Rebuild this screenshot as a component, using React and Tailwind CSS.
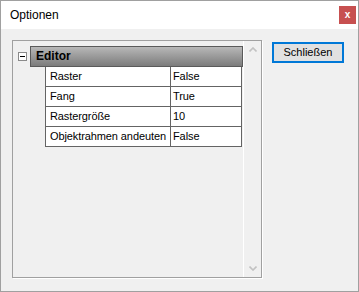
export default function App() {
  const rows = [
    ['Raster', 'False'],
    ['Fang', 'True'],
    ['Rastergröße', '10'],
    ['Objektrahmen andeuten', 'False'],
  ];

  return (
    <div className="w-[359px] h-[292px] border border-[#a0a0a0] flex flex-col bg-[#f0f0f0] text-[12px] text-black font-['Segoe_UI','Liberation_Sans',sans-serif]">
      {/* Title bar */}
      <div className="h-[28px] shrink-0 bg-white flex items-start justify-between">
        <span className="ml-[9px] mt-[6px] leading-[16px]">Optionen</span>
        <div className="mt-[5px] mr-[2px] w-[17px] h-[18px] bg-[#c75050] text-white text-[10px] font-bold leading-[18px] text-center">
          x
        </div>
      </div>

      {/* Client area */}
      <div className="flex flex-1 pl-[11px] pt-[11px]">
        {/* Property grid */}
        <div className="w-[250px] h-[238px] border border-[#a0a0a0] flex shadow-[1px_1px_0_#fff]">
          <div className="flex-1 pt-[5px]">
            <div className="flex items-center">
              <div className="ml-[5px] w-[9px] h-[9px] border border-[#8a8a8a] bg-white flex items-center justify-center">
                <div className="w-[5px] h-px bg-black" />
              </div>
              <div className="ml-[3px] flex-1 h-[21px] border border-[#5a5a5a] bg-gradient-to-b from-[#b8b8b8] to-[#7c7c7c] pl-[5px] font-bold leading-[19px]">
                Editor
              </div>
            </div>
            <div className="ml-[32px] w-[197px] border-l border-r border-[#646464] text-[11px] tracking-[-0.1px]">
              {rows.map(([label, value]) => (
                <div key={label} className="flex h-[20px] border-b border-[#646464] leading-[19px]">
                  <div className="w-[125px] border-r border-[#646464] bg-white pl-[4px] whitespace-nowrap">{label}</div>
                  <div className="flex-1 bg-white pl-[2px]">{value}</div>
                </div>
              ))}
            </div>
          </div>

          {/* Scrollbar */}
          <div className="w-[18px] border-l border-white flex flex-col justify-between">
            <div className="h-[17px] flex items-center justify-center">
              <svg width="8" height="5" viewBox="0 0 8 5" fill="none" stroke="#c2c2c2" strokeWidth="1.6">
                <path d="M0.5 4.5L4 1L7.5 4.5" />
              </svg>
            </div>
            <div className="h-[17px] flex items-center justify-center">
              <svg width="8" height="5" viewBox="0 0 8 5" fill="none" stroke="#c2c2c2" strokeWidth="1.6">
                <path d="M0.5 0.5L4 4L7.5 0.5" />
              </svg>
            </div>
          </div>
        </div>

        <div className="ml-[10px] mt-[2px] w-[72px] h-[21px] border-2 border-[#0078d7] bg-[#e1e1e1] flex items-center justify-center leading-none text-[11px]">
          Schließen
        </div>
      </div>
    </div>
  );
}
